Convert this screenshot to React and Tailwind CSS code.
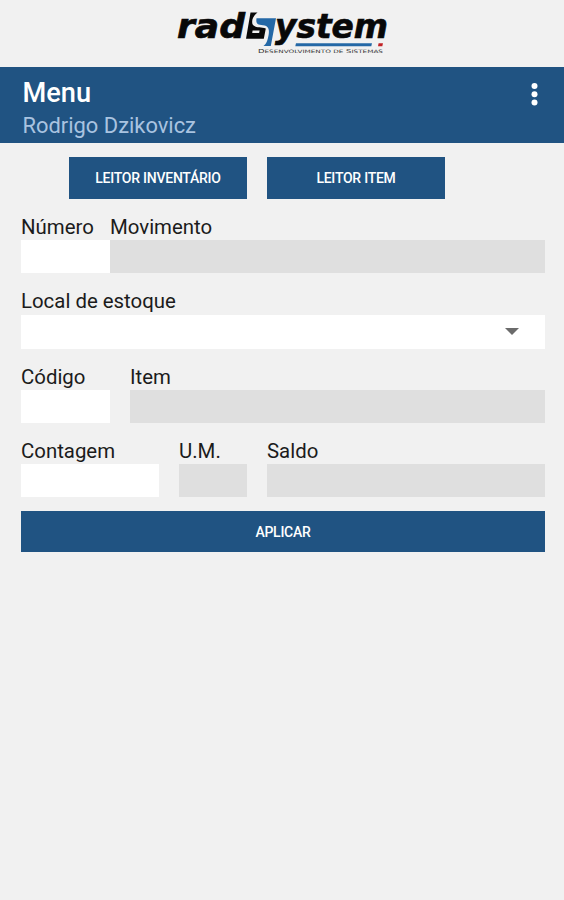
import { useState } from 'react';

const Logo = () => (
  <svg className="block w-[220px] h-[67px] overflow-visible" viewBox="172 0 220 67" role="img" aria-label="radSystem">
    <g
      fontFamily='"DejaVu Sans", sans-serif'
      fontWeight="bold"
      fontStyle="italic"
      fontSize="34"
      fill="#080808"
      stroke="#080808"
      strokeWidth="0.7"
    >
      <text x="177" y="38.3" textLength="68" lengthAdjust="spacingAndGlyphs">rad</text>
      <text x="275" y="38.3" textLength="113" lengthAdjust="spacingAndGlyphs">ystem</text>
    </g>
    {/* Emblem */}
    <path d="M250.5 12.5 H257.5 C252.5 16.5 251 22 253 25 C255.5 28 261 26.5 265.8 28.5 L263.8 38.8 H246 Z" fill="#080808" />
    <path d="M252.6 30.6 H259.6 L259.1 33 H252.2 Z" fill="#f1f1f1" />
    <path d="M256.5 18.3 H276 L270.8 46 H263.5 C266.8 43.5 267.6 40 268.6 35 C269.8 29 268 25.6 263 25.2 C258.5 25 255.5 24.5 256.5 18.3 Z" fill="#2468a6" />
    {/* Underline and tagline */}
    <path d="M296 43.3 H372 L371.3 46.3 H295.3 Z" fill="#2468a6" />
    <path d="M378.6 43.3 H383 L382.3 46.3 H378 Z" fill="#c12226" />
    <text x="258" y="53.4" textLength="125" lengthAdjust="spacingAndGlyphs" fontFamily='"DejaVu Sans", sans-serif' fontSize="5.4" fill="#333">
      D<tspan fontSize="4.6">ESENVOLVIMENTO DE</tspan> S<tspan fontSize="4.6">ISTEMAS</tspan>
    </text>
  </svg>
);

const Button = ({ className, children }) => (
  <button className={`bg-[#205382] text-white text-[14px] tracking-[-0.25px] font-medium leading-none text-center ${className}`}>
    {children}
  </button>
);

const Field = ({ label, className, readOnly = false }) => {
  const [value, setValue] = useState('');

  return (
    <label className={`block ${className}`}>
      <span className="block h-6 text-[20.4px] leading-6 text-[#1b1b1b] whitespace-nowrap">{label}</span>
      <input
        value={value}
        onChange={(e) => setValue(e.target.value)}
        readOnly={readOnly}
        className={`block mt-px w-full h-[33px] px-2 outline-none ${readOnly ? 'bg-[#dfdfdf]' : 'bg-white'}`}
      />
    </label>
  );
};

const App = () => {
  return (
    <div className="min-h-[900px] bg-[#f1f1f1] font-['Roboto',sans-serif]">
      <div className="h-[67px] pl-[172px]">
        <Logo />
      </div>

      {/* App bar */}
      <header className="flex justify-between h-[76px] pl-[22.5px] pr-[25px] bg-[#205382]">
        <div className="pt-2.5">
          <h1 className="text-[27.2px] leading-8 font-medium text-white">Menu</h1>
          <p className="pt-px text-[21.9px] leading-8 text-[#a9c3e0]">Rodrigo Dzikovicz</p>
        </div>
        <button className="self-start pt-4" aria-label="Menu">
          <svg className="block w-[9px] h-6" viewBox="0 0 9 24" fill="#fff">
            <circle cx="4.5" cy="3" r="3" />
            <circle cx="4.5" cy="11.3" r="3" />
            <circle cx="4.5" cy="19.6" r="3" />
          </svg>
        </button>
      </header>

      <main className="pl-[21px] pr-[19px] pt-3.5">
        <div className="flex gap-5 pl-12">
          <Button className="w-[178px] h-[42px]">LEITOR INVENTÁRIO</Button>
          <Button className="w-[178px] h-[42px]">LEITOR ITEM</Button>
        </div>

        <div className="flex mt-4">
          <Field label="Número" className="w-[89px]" />
          <Field label="Movimento" className="flex-1" readOnly />
        </div>

        <div className="mt-4">
          <span className="block h-[26px] text-[20.4px] leading-6 text-[#1b1b1b]">Local de estoque</span>
          <button className="flex items-center justify-end w-full h-[34px] pr-[26px] pb-0.5 bg-white" aria-label="Local de estoque">
            <svg className="w-3.5 h-[7px]" viewBox="0 0 14 7" fill="#6b6b6b">
              <path d="M0 0h14L7 7z" />
            </svg>
          </button>
        </div>

        <div className="flex gap-5 mt-4">
          <Field label="Código" className="w-[89px]" />
          <Field label="Item" className="flex-1" readOnly />
        </div>

        <div className="flex gap-5 mt-4">
          <Field label="Contagem" className="w-[138px]" />
          <Field label="U.M." className="w-[68px]" readOnly />
          <Field label="Saldo" className="flex-1" readOnly />
        </div>

        <Button className="block w-full h-[41px] mt-3.5">APLICAR</Button>
      </main>
    </div>
  );
};

export default App;
